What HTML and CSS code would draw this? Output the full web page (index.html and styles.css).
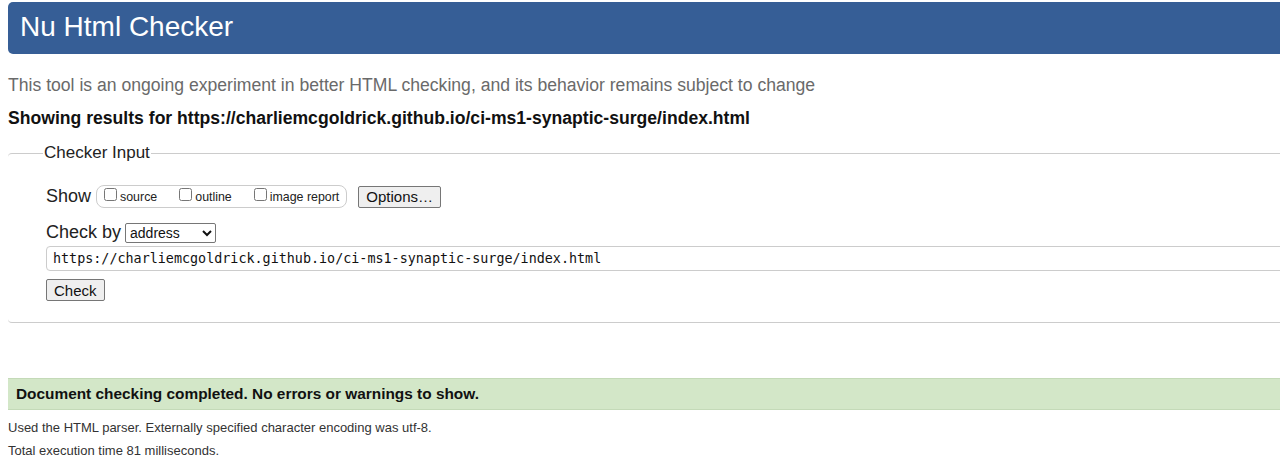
FILE: index.html
```html
<!DOCTYPE html>
<html lang="en">
<head>
<meta charset="utf-8">
<title>Nu Html Checker</title>
<link rel="stylesheet" href="styles.css">
</head>
<body>
<header class="banner"><h1 class="title">Nu Html Checker</h1></header>
<p class="intro">This tool is an ongoing experiment in better HTML checking, and its behavior remains subject to change</p>
<p class="showing">Showing results for https://charliemcgoldrick.github.io/ci-ms1-synaptic-surge/index.html</p>
<fieldset class="input-box">
  <legend class="legend">Checker Input</legend>
  <div class="row show-row">
    <span class="lbl">Show</span>
    <span class="opts">
      <label class="opt"><input type="checkbox" class="cb">source</label>
      <label class="opt"><input type="checkbox" class="cb">outline</label>
      <label class="opt"><input type="checkbox" class="cb">image report</label>
    </span>
    <button class="btn opt-btn" type="button">Options…</button>
  </div>
  <div class="row by-row">
    <span class="lbl">Check by</span>
    <select class="sel"><option>address</option></select>
  </div>
  <input class="url" type="text" value="https://charliemcgoldrick.github.io/ci-ms1-synaptic-surge/index.html">
  <div class="row"><button class="btn check-btn" type="button">Check</button></div>
</fieldset>
<div class="success">Document checking completed. No errors or warnings to show.</div>
<p class="note">Used the HTML parser. Externally specified character encoding was utf-8.</p>
<p class="note">Total execution time 81 milliseconds.</p>
</body>
</html>
```
FILE: styles.css
```css
html { overflow-x: hidden; }
body {
  margin: 2px -20px 0 8px;
  font-family: "Liberation Sans", Arial, sans-serif;
  color: #222;
  background: #fff;
}
.banner {
  background: #365e96;
  border-radius: 5px;
  height: 52px;
  display: flex;
  align-items: center;
  padding-left: 12px;
}
.title {
  margin: 0;
  font-weight: normal;
  font-size: 28px;
  color: #fff;
  position: relative;
  top: -1px;
}
.intro {
  margin: 20px 0 0 0;
  font-size: 17.6px;
  line-height: 22px;
  color: #6a6a6a;
}
.showing {
  margin: 11px 0 0 0;
  font-size: 17.6px;
  line-height: 22px;
  font-weight: bold;
  color: #111;
}
.input-box {
  margin: 14px 0 0 0;
  border: 0;
  border-top: 1px solid #ccc;
  border-bottom: 1px solid #ccc;
  border-radius: 4px;
  padding: 22px 0 21px 38px;
}
.legend {
  padding: 0 1px;
  margin-left: -3px;
  font-size: 17px;
  color: #222;
}
.row { display: flex; align-items: center; }
.lbl { font-size: 18px; color: #222; }
.opts {
  margin-left: 5px;
  border: 1px solid #ccc;
  border-radius: 8px;
  height: 21px;
  padding: 0 7px 0 7px;
  display: flex;
  align-items: center;
  gap: 22px;
  font-size: 12.4px;
}
.opt { display: flex; align-items: center; color: #222; }
.cb { margin: 0 3px 0 0; width: 13px; height: 13px; position: relative; top: -2px; }
.btn {
  font-family: "Liberation Sans", Arial, sans-serif;
  font-size: 15px;
  background: #efefef;
  border: 1px solid #767676;
  border-radius: 2px;
  height: 22px;
  padding: 0 8px;
  color: #111;
}
.opt-btn { margin-left: 11px; padding: 0 7px; }
.by-row { margin-top: 14px; }
.sel {
  margin-left: 4px;
  font-family: "Liberation Sans", Arial, sans-serif;
  font-size: 14px;
  width: 91px;
  height: 20px;
  border: 1px solid #767676;
  border-radius: 2px;
  background: #fff;
  color: #111;
  padding: 0;
}
.url {
  display: block;
  margin-top: 3px;
  width: 100%;
  box-sizing: border-box;
  height: 25px;
  border: 1px solid #ccc;
  border-radius: 4px;
  padding: 0 6px;
  font-family: "DejaVu Sans Mono", "Liberation Mono", monospace;
  font-size: 13.4px;
  color: #111;
}
.check-btn { margin-top: 8px; padding: 0 7px; }
.success {
  margin-top: 55px;
  background: #d3e7c8;
  border-top: 1px solid #c4dab8;
  border-bottom: 1px solid #c4dab8;
  height: 30px;
  display: flex;
  align-items: center;
  padding-left: 8px;
  font-size: 15.4px;
  font-weight: bold;
  color: #111;
}
.note {
  margin: 0;
  font-size: 13px;
  line-height: 23px;
  color: #333;
}
.success + .note { margin-top: 6px; }
```
